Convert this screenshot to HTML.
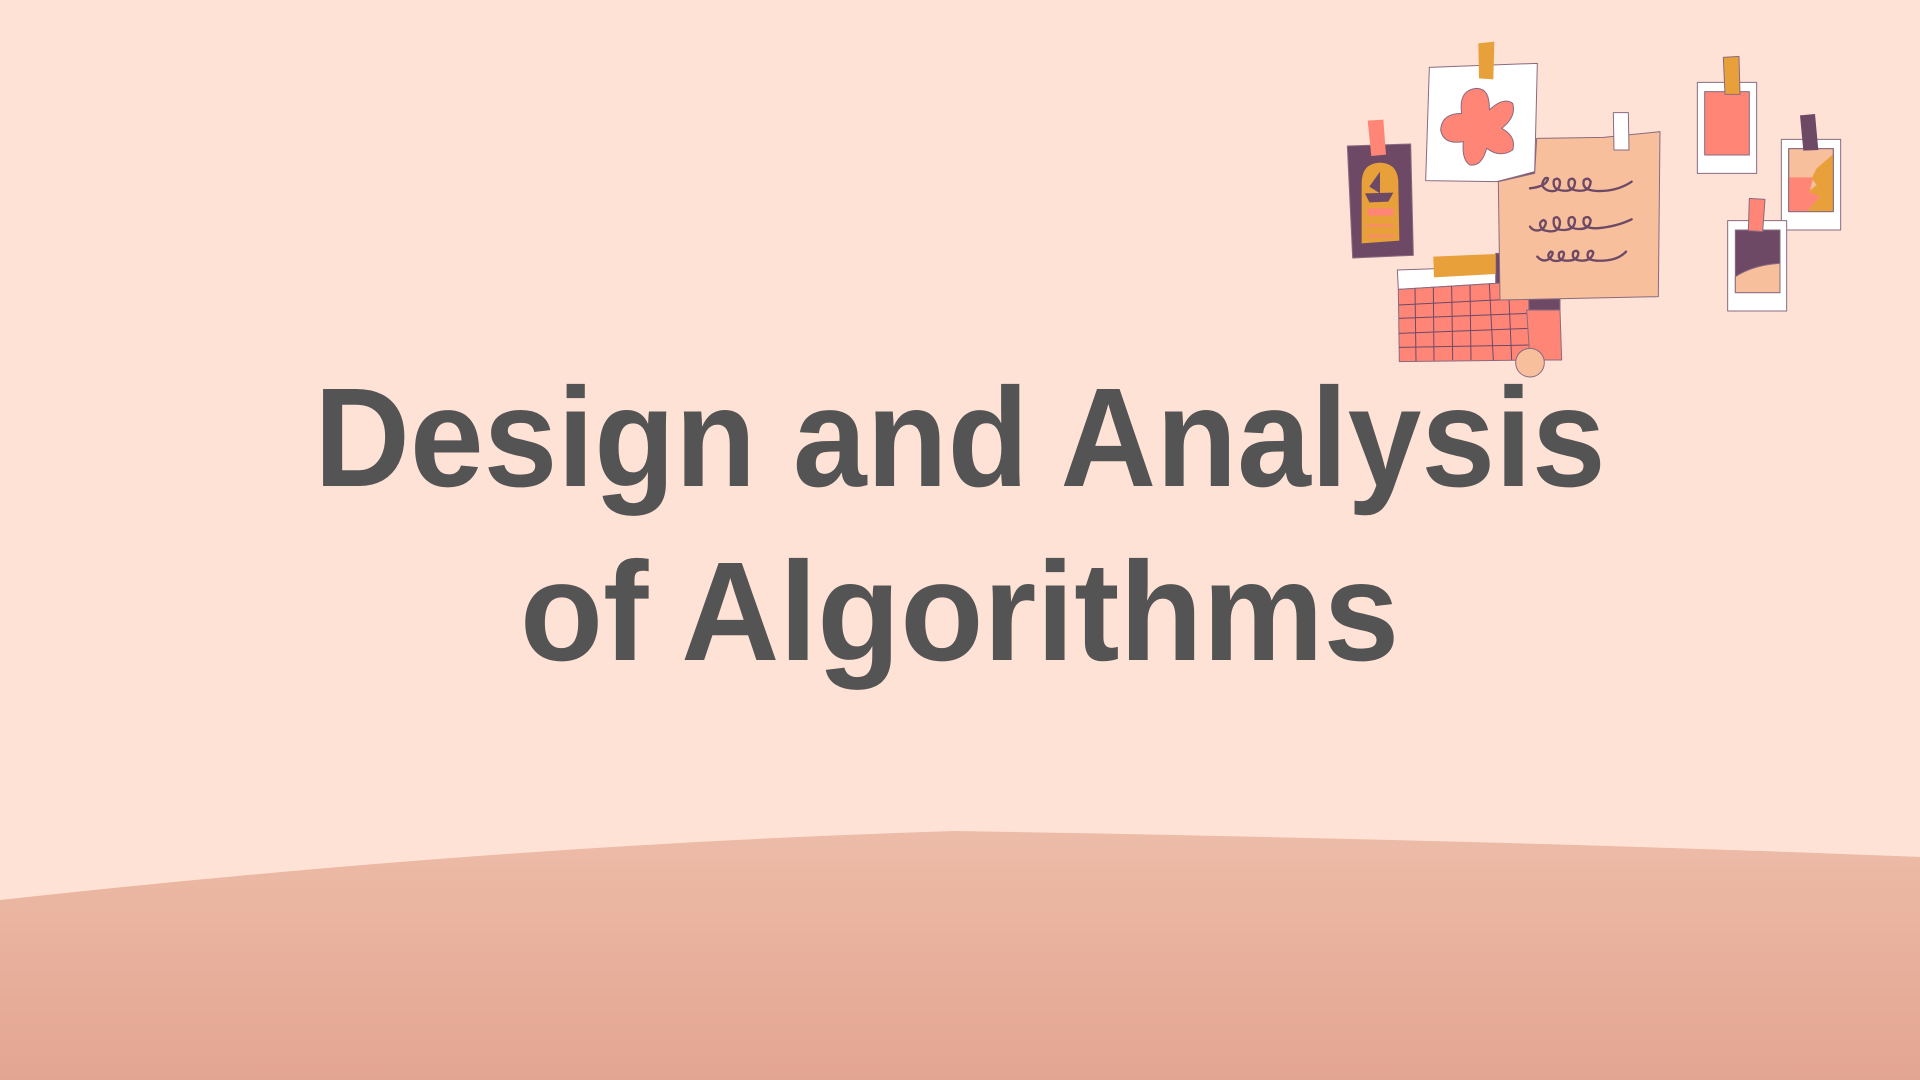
<!DOCTYPE html>
<html><head><meta charset="utf-8"><style>
html,body{margin:0;padding:0}
body{width:1920px;height:1080px;overflow:hidden;background:#ffe2d6;position:relative;font-family:"Liberation Sans",sans-serif}
.t{position:absolute;left:0;width:1920px;text-align:center;font-weight:bold;color:#545454;font-size:141px;line-height:1;white-space:nowrap}
.t span{display:inline-block;transform-origin:center}
</style></head><body>
<svg width="1920" height="1080" style="position:absolute;left:0;top:0">
<defs><linearGradient id="g" x1="0" y1="0" x2="0" y2="1"><stop offset="0" stop-color="#edbca8"/><stop offset="1" stop-color="#e3a591"/></linearGradient></defs>
<path d="M0 900 Q500 845 955 831 Q1500 840 1920 857 L1920 1080 L0 1080 Z" fill="url(#g)"/>
</svg>
<div class="t" style="top:392px"><span style="position:relative;top:-25px;transform:scaleX(0.94)">Design and Analysis</span></div>
<div class="t" style="top:566px"><span style="position:relative;top:-25px;transform:scaleX(0.965)">of Algorithms</span></div>
<svg width="520" height="350" viewBox="0 0 1560 1050" style="position:absolute;left:1330px;top:30px">
<g stroke="#8a6a80" stroke-width="3" stroke-linejoin="round">
<polygon points="52,348 242,342 250,676 68,684" fill="#6d4966"/>
<path d="M95,640 L95,460 Q95,400 150,398 Q205,400 205,460 L208,632 Z" fill="#e8a03a" stroke="none"/>
<polygon points="150,425 150,490 118,470" fill="#6d4966" stroke="none"/>
<polygon points="105,490 190,488 175,515 118,517" fill="#6d4966" stroke="none"/>
<rect x="113" y="535" width="77" height="22" fill="#ff8577" stroke="none"/>
<path d="M110,590 q10,-12 20,0 q10,-12 20,0 q10,-12 20,0 q10,-12 20,0 M112,622 q10,-12 20,0 q10,-12 20,0 q10,-12 20,0 q10,-12 20,0" fill="none" stroke="#ff8577" stroke-width="5"/>
<polygon points="113,272 160,269 168,374 124,378" fill="#ff8577" stroke="none"/>
<polygon points="497,670 690,670 690,840 497,840" fill="#6d4966"/>
<polygon points="202,720 497,710 497,760 205,778" fill="#fff"/>
<polygon points="205,778 497,760 595,755 600,990 208,995" fill="#ff8577"/>
<g stroke="#6d4966" stroke-width="3"><path d="M255,775 L258,993 M310,772 L312,992 M365,768 L368,990 M420,765 L423,990 M478,762 L490,990 M535,758 L545,990 M206,825 L596,805 M207,865 L597,850 M207,910 L598,895 M207,952 L599,945"/></g>
<polygon points="590,840 690,840 695,990 600,990" fill="#ff8577"/>
<polygon points="310,680 497,672 497,732 312,742" fill="#e8a03a" stroke="none"/>
<circle cx="600" cy="998" r="43" fill="#f7bf9b"/>
<polygon points="506,440 622,425 614,458 510,460" fill="#6d4966" stroke="none"/>
<polygon points="298,112 622,100 614,425 500,455 287,452" fill="#fff"/>
<path d="M440,175 Q480,175 478,240 Q520,200 548,220 Q560,260 515,295 Q560,320 548,360 Q510,385 470,355 Q455,410 420,405 Q395,390 400,335 Q340,345 332,300 Q335,250 395,250 Q385,180 440,175 Z" fill="#ff8577"/>
<polygon points="445,40 493,35 490,148 447,145" fill="#e8a03a" stroke="none"/>
<polygon points="620,325 820,322 990,305 985,800 510,810 505,455 614,430" fill="#f7bf9b"/>
<g fill="none" stroke="#6d4966" stroke-width="7" stroke-linecap="round">
<path d="M600,475 Q640,470 650,455 Q660,440 645,445 Q625,470 655,482 Q690,490 690,455 Q685,440 672,450 Q665,480 700,482 Q735,485 735,455 Q730,440 717,450 Q708,480 745,482 Q780,485 782,455 Q775,440 762,450 Q752,480 800,483 Q860,485 905,455"/>
<path d="M600,590 Q615,610 640,595 Q655,575 640,570 Q620,580 640,600 Q690,615 690,575 Q685,555 672,565 Q665,600 700,600 Q735,600 735,570 Q730,555 717,565 Q708,595 745,597 Q780,598 782,570 Q775,555 762,565 Q752,595 800,595 Q860,590 905,568"/>
<path d="M622,680 Q640,700 660,685 Q675,665 662,665 Q645,680 670,692 Q700,698 702,670 Q698,660 688,668 Q680,692 712,692 Q745,692 745,668 Q740,658 730,666 Q722,690 755,692 Q785,692 790,668 Q785,658 775,666 Q765,690 800,692 Q860,695 888,665"/>
</g>
<polygon points="850,248 895,248 897,360 852,360" fill="#fff"/>
<rect x="1102" y="157" width="178" height="273" fill="#fff"/>
<rect x="1124" y="185" width="134" height="190" fill="#ff8577"/>
<polygon points="1180,82 1227,79 1230,193 1185,193" fill="#e8a03a"/>
<rect x="1354" y="328" width="178" height="272" fill="#fff"/>
<rect x="1376" y="356" width="134" height="189" fill="#f7bf9b"/>
<polygon points="1376,442 1450,442 1440,480 1470,500 1430,545 1376,545" fill="#ff8577" stroke="none"/>
<polygon points="1510,372 1460,415 1445,445 1460,465 1435,485 1470,500 1430,545 1510,545" fill="#e8a03a" stroke="none"/>
<rect x="1376" y="356" width="134" height="189" fill="none"/>
<polygon points="1410,256 1455,252 1465,360 1420,362" fill="#6d4966" stroke="none"/>
<rect x="1193" y="572" width="177" height="271" fill="#fff"/>
<rect x="1216" y="600" width="134" height="188" fill="#6d4966"/>
<path d="M1216,740 Q1270,705 1350,700 L1350,788 L1216,788 Z" fill="#f7bf9b"/>
<polygon points="1258,505 1305,508 1298,605 1255,602" fill="#ff8577"/>
</g>
</svg>
</body></html>
